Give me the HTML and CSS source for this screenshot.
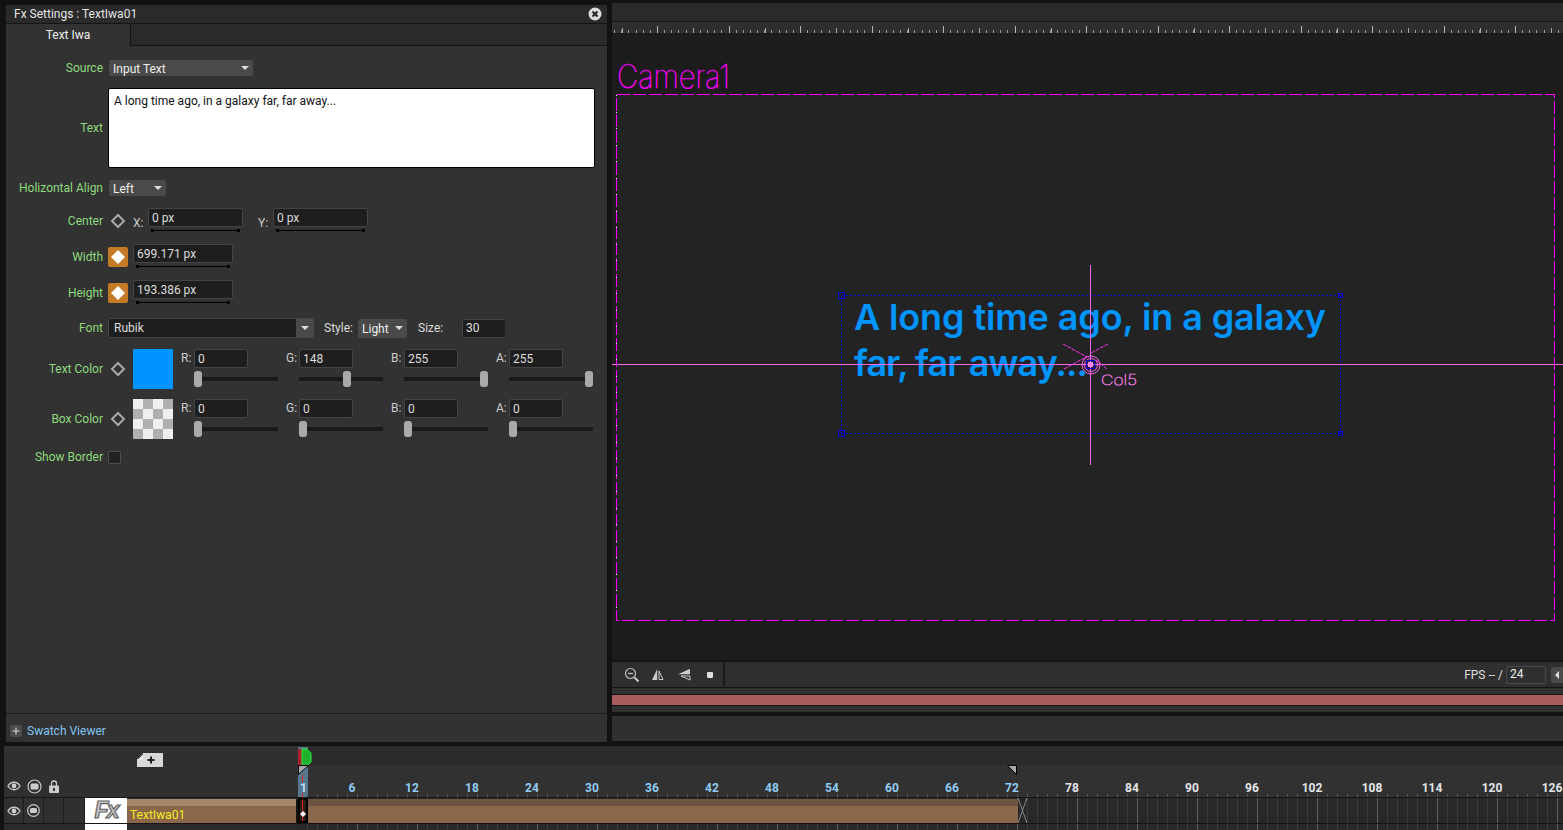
FILE: index.html
```html
<!DOCTYPE html>
<html lang="en">
<head>
<meta charset="utf-8">
<title>Fx Settings : TextIwa01</title>
<link rel="stylesheet" href="styles.css">
</head>
<body>
<div class="app">
  <div class="top">
    <section class="fx-panel">
      <header class="fx-title">
        <span>Fx Settings : TextIwa01</span>
        <svg class="close" width="14" height="14" viewBox="0 0 14 14"><circle cx="7" cy="7" r="6.500" fill="#dcdcdc"/><path d="M4.500 4.500l5 5M9.500 4.500l-5 5" stroke="#222" stroke-width="2"/></svg>
      </header>
      <div class="tabs"><div class="tab">Text Iwa</div></div>
      <div class="form">
        <div class="row h16">
          <label class="lbl">Source</label>
          <div class="select w144"><span>Input Text</span><i class="caret"></i></div>
        </div>
        <div class="row h80 mt12">
          <label class="lbl">Text</label>
          <div class="textbox">A long time ago, in a galaxy far, far away...</div>
        </div>
        <div class="row h16 mt12">
          <label class="lbl">Holizontal Align</label>
          <div class="select w57"><span>Left</span><i class="caret"></i></div>
        </div>
        <div class="row h26 mt12">
          <label class="lbl">Center</label>
          <svg class="kf" width="20" height="20" viewBox="0 0 20 20"><path d="M10 4l6 6-6 6-6-6z" fill="none" stroke="#a8a8a8" stroke-width="2"/></svg>
          <span class="axis">X:</span>
          <div class="field w95"><div class="num">0 px</div><div class="arrow"></div></div>
          <span class="axis axis-y">Y:</span>
          <div class="field w95"><div class="num">0 px</div><div class="arrow"></div></div>
        </div>
        <div class="row h26 mt10">
          <label class="lbl">Width</label>
          <svg class="kf on" width="20" height="20" viewBox="0 0 20 20"><rect width="20" height="20" rx="2" fill="#c47a26"/><path d="M10 3l7 7-7 7-7-7z" fill="#fff"/></svg>
          <div class="field w100"><div class="num">699.171 px</div><div class="arrow"></div></div>
        </div>
        <div class="row h26 mt10">
          <label class="lbl">Height</label>
          <svg class="kf on" width="20" height="20" viewBox="0 0 20 20"><rect width="20" height="20" rx="2" fill="#c47a26"/><path d="M10 3l7 7-7 7-7-7z" fill="#fff"/></svg>
          <div class="field w100"><div class="num">193.386 px</div><div class="arrow"></div></div>
        </div>
        <div class="row h20 mt12">
          <label class="lbl">Font</label>
          <div class="combo"><span>Rubik</span><b class="combo-btn"><i class="caret"></i></b></div>
          <span class="plain style-lbl">Style:</span>
          <div class="select w49"><span>Light</span><i class="caret"></i></div>
          <span class="plain size-lbl">Size:</span>
          <div class="num size">30</div>
        </div>
        <div class="row h40 mt11">
          <label class="lbl">Text Color</label>
          <svg class="kf" width="20" height="20" viewBox="0 0 20 20"><path d="M10 4l6 6-6 6-6-6z" fill="none" stroke="#a8a8a8" stroke-width="2"/></svg>
          <div class="swatch blue"></div>
          <div class="channels">
            <div class="channel"><span class="ch">R:</span><div class="num">0</div><div class="track"><i class="thumb" style="left:0"></i></div></div>
            <div class="channel"><span class="ch">G:</span><div class="num">148</div><div class="track"><i class="thumb" style="left:44px"></i></div></div>
            <div class="channel"><span class="ch">B:</span><div class="num">255</div><div class="track"><i class="thumb" style="left:76px"></i></div></div>
            <div class="channel"><span class="ch">A:</span><div class="num">255</div><div class="track"><i class="thumb" style="left:76px"></i></div></div>
          </div>
        </div>
        <div class="row h40 mt10">
          <label class="lbl">Box Color</label>
          <svg class="kf" width="20" height="20" viewBox="0 0 20 20"><path d="M10 4l6 6-6 6-6-6z" fill="none" stroke="#a8a8a8" stroke-width="2"/></svg>
          <div class="swatch checker"></div>
          <div class="channels">
            <div class="channel"><span class="ch">R:</span><div class="num">0</div><div class="track"><i class="thumb" style="left:0"></i></div></div>
            <div class="channel"><span class="ch">G:</span><div class="num">0</div><div class="track"><i class="thumb" style="left:0"></i></div></div>
            <div class="channel"><span class="ch">B:</span><div class="num">0</div><div class="track"><i class="thumb" style="left:0"></i></div></div>
            <div class="channel"><span class="ch">A:</span><div class="num">0</div><div class="track"><i class="thumb" style="left:0"></i></div></div>
          </div>
        </div>
        <div class="row h14 mt11">
          <label class="lbl">Show Border</label>
          <div class="check"></div>
        </div>
      </div>
      <footer class="swatch-bar">
        <svg class="plus" width="12" height="12" viewBox="0 0 12 12"><rect width="12" height="12" rx="2" fill="#4c4c4c"/><path d="M6 2.500v7M2.500 6h7" stroke="#ddd" stroke-width="1"/></svg>
        <span>Swatch Viewer</span>
      </footer>
    </section>

    <section class="viewer-col">
      <div class="viewer-title"></div>
      <svg class="ruler" width="951" height="11" viewBox="612 22 951 11">
        <line x1="585.5" x2="1563" y1="31.5" y2="31.5" stroke="#9a9a9a" stroke-width="3" stroke-dasharray="1 6.15" shape-rendering="crispEdges"/>
        <line x1="621.75" x2="1563" y1="30.5" y2="30.5" stroke="#aaa" stroke-width="5" stroke-dasharray="1 70.5" shape-rendering="crispEdges"/>
        <line x1="585.5" x2="1563" y1="29.5" y2="29.5" stroke="#b5b5b5" stroke-width="7" stroke-dasharray="1 70.5" shape-rendering="crispEdges"/>
      </svg>
      <svg class="canvas" width="951" height="627" viewBox="612 33 951 627">
        <rect x="617" y="95" width="938" height="525" fill="#232323"/>
        <rect x="616.5" y="94.500" width="938" height="526" fill="none" stroke="#ff00ff" stroke-width="1" stroke-dasharray="13 3" shape-rendering="crispEdges"/>
        <line x1="616.5" x2="616.5" y1="95" y2="620" stroke="#fff" stroke-dasharray="1 15.500" shape-rendering="crispEdges"/>
        <text class="cam" x="617" y="88" textLength="113" lengthAdjust="spacingAndGlyphs">Camera1</text>
        <text class="head" x="854" y="330" textLength="472">A long time ago, in a galaxy</text>
        <text class="head" x="854" y="376" textLength="234">far, far away...</text>
        <g fill="none" stroke="#0000e0" shape-rendering="crispEdges">
          <path d="M841.5 295.500H1340.500M841.5 433.500H1340.500M841.5 295.500V433.500M1340.500 295.500V433.500" stroke-dasharray="2 2"/>
          <rect x="838.5" y="292.500" width="6" height="6"/>
          <rect x="838.5" y="430.500" width="6" height="6"/>
          <rect x="1338.5" y="293.500" width="4" height="4"/>
          <rect x="1338.5" y="431.500" width="4" height="4"/>
        </g>
        <g stroke="#ff66ee" fill="none">
          <line x1="612" x2="1563" y1="364.500" y2="364.500"/>
          <line x1="1090.500" x2="1090.500" y1="265" y2="465"/>
          <circle cx="1091" cy="365" r="9"/>
          <circle cx="1091" cy="365" r="6.500"/>
          <path d="M1063 344l24 13M1108 344l-17 9M1064 369l24-13M1096 360l11 9" stroke="#ff33ee" stroke-dasharray="4 1"/>
        </g>
        <rect x="1086.500" y="360.500" width="8" height="8" fill="none" stroke="#0000e0"/>
        <rect x="1088" y="362" width="5" height="5" fill="#ff88f2"/>
        <text class="col" x="1101" y="385" textLength="36" lengthAdjust="spacingAndGlyphs">Col5</text>
      </svg>
      <div class="viewer-bar">
        <div class="tools">
          <svg width="16" height="16" viewBox="0 0 16 16"><circle cx="6.500" cy="6.500" r="5" fill="none" stroke="#bbb" stroke-width="1.200"/><path d="M4 6.500h5" stroke="#bbb" stroke-width="1.400"/><path d="M10.500 10.500l4 4" stroke="#ccc" stroke-width="2"/></svg>
          <svg width="12" height="13" viewBox="0 0 12 13"><path d="M5.200 1v11H0z" fill="#ccc"/><path d="M7 3v8.500h4z" fill="none" stroke="#ccc"/></svg>
          <svg class="flip-v" width="13" height="12" viewBox="0 0 13 12"><path d="M12 0H11.500L0 5.200H12z" fill="#ccc"/><path d="M3 7h9v4z" fill="none" stroke="#ccc"/></svg>
          <i class="stop"></i>
        </div>
        <div class="fps">
          <span>FPS -- /</span>
          <div class="fps-input">24</div>
          <div class="fps-btn"><i></i></div>
        </div>
      </div>
      <div class="spacer-a"></div>
      <div class="redbar"></div>
      <div class="spacer-b"></div>
      <div class="viewer-foot"></div>
    </section>
  </div>

  <section class="timeline">
    <div class="tl-head">
      <div class="tl-head-left">
        <svg class="add-layer" width="26" height="14" viewBox="0 0 26 14"><path d="M0 14V6L6 0H26V14z" fill="#d8d8d8"/><path d="M0 6L6 0V6z" fill="#2f2f2f"/><path d="M1 6.500L6 1.500V6.500z" fill="#f2f2f2"/><path d="M14 3.500v7M10.500 7h7" stroke="#222" stroke-width="2"/></svg>
        <div class="col-icons">
          <div class="cell-i"><svg width="14" height="10" viewBox="0 0 14 10"><path d="M1 5c3-5 9-5 12 0-3 5-9 5-12 0z" fill="none" stroke="#ccc" stroke-width="1.300"/><circle cx="7" cy="5" r="2.400" fill="#ccc"/></svg></div>
          <div class="cell-i"><svg width="15" height="15" viewBox="0 0 15 15"><circle cx="7.500" cy="7.500" r="6.500" fill="none" stroke="#ccc" stroke-width="1.200"/><rect x="3.500" y="4.500" width="8" height="6" rx="1.500" fill="#ccc"/></svg></div>
          <div class="cell-i"><svg width="10" height="13" viewBox="0 0 10 13"><path d="M2.500 6V3.500a2.500 2.500 0 0 1 5 0V6" fill="none" stroke="#ccc" stroke-width="1.300"/><rect y="5.500" width="10" height="7.500" rx="1" fill="#ccc"/><rect x="4" y="8" width="2" height="3" fill="#333"/></svg></div>
        </div>
      </div>
      <div class="tl-head-right">
        <div class="band"></div>
        <div class="frames">
          <span class="first">1</span>
          <span>6</span><span>12</span><span>18</span><span>24</span><span>30</span><span>36</span><span>42</span><span>48</span><span>54</span><span>60</span><span>66</span><span>72</span>
          <span class="out">78</span><span class="out">84</span><span class="out">90</span><span class="out">96</span><span class="out">102</span><span class="out">108</span><span class="out">114</span><span class="out">120</span><span class="out">126</span>
        </div>
        <svg class="marker" width="951" height="51" viewBox="298 746 951 51">
          <path d="M298 749h4v17h-4z" fill="#a8242a"/>
          <path d="M302 749h5l4 4v9l-4 4h-5z" fill="#1fb22c" stroke="#28e838"/>
          <path d="M298.500 765.500h10l-10 9z" fill="#aaa" stroke="#000"/>
          <path d="M1007.500 765.500h9v9z" fill="#aaa" stroke="#000"/>
          <line x1="302.500" x2="302.500" y1="775" y2="782" stroke="#e02020"/>
          <line x1="302.500" x2="302.500" y1="793" y2="797" stroke="#e02020"/>
        </svg>
      </div>
    </div>
    <div class="tl-row">
      <div class="layer-left">
        <div class="cell-i"><svg width="14" height="10" viewBox="0 0 14 10"><path d="M1 5c3-5 9-5 12 0-3 5-9 5-12 0z" fill="none" stroke="#ccc" stroke-width="1.3"/><circle cx="7" cy="5" r="2.400" fill="#ccc"/></svg></div>
        <div class="cell-i"><svg width="13" height="13" viewBox="0 0 13 13"><circle cx="6.500" cy="6.500" r="5.800" fill="none" stroke="#ccc" stroke-width="1.200"/><rect x="3" y="4" width="7" height="5" rx="1.500" fill="#ccc"/></svg></div>
        <div class="cell-i"></div>
        <div class="cell-i cell-wide"></div>
        <div class="thumb-fx"><span>Fx</span></div>
        <div class="layer-name">TextIwa01</div>
      </div>
      <div class="layer-track">
        <div class="cell-now"><svg width="8" height="8" viewBox="0 0 8 8"><path d="M4 0l4 4-4 4-4-4z" fill="#fff"/></svg></div>
        <div class="level"></div>
        <svg class="end-x" width="10" height="25" viewBox="0 0 10 25"><path d="M0 0l9 25M9 0L0 25" stroke="#8a8a8a" fill="none"/></svg>
      </div>
    </div>
    <div class="tl-row next">
      <div class="layer-left"><div class="next-gap"></div><div class="thumb-blank"></div></div>
      <div class="layer-track"></div>
    </div>
  </section>
</div>
</body>
</html>
```

FILE: styles.css
```css
* { box-sizing: border-box; }
html, body { margin: 0; height: 100%; }
body { background: #121212; overflow: hidden; font: 12px/16px "Roboto", "Open Sans", sans-serif; color: #ddd; font-variant-ligatures: none; }
.app { width: 1563px; height: 830px; display: flex; flex-direction: column; overflow: hidden; }

.top { display: flex; height: 746px; flex: none; }
.fx-panel { width: 601px; margin: 5px 5px 0 6px; height: 737px; background: #323232; display: flex; flex-direction: column; flex: none; }
.fx-title { height: 19px; padding: 0 5px 0 8px; background: #2a2a2a; border-bottom: 1px solid #141414; display: flex; align-items: center; justify-content: space-between; color: #e4e4e4; flex: none; }
.tabs { height: 22px; background: #2a2a2a; border-bottom: 1px solid #141414; flex: none; }
.tab { width: 125px; height: 22px; background: #323232; border-right: 1px solid #141414; text-align: center; line-height: 22px; color: #eee; }

.form { flex: 1; padding-top: 14px; }
.row { display: flex; align-items: center; }
.h14 { height: 14px; } .h16 { height: 16px; } .h20 { height: 20px; } .h26 { height: 26px; } .h40 { height: 40px; } .h80 { height: 80px; }
.mt10 { margin-top: 10px; } .mt11 { margin-top: 11px; } .mt12 { margin-top: 12px; }
.lbl { width: 97px; margin-right: 5px; text-align: right; color: #8ed97c; white-space: nowrap; flex: none; }

.select { height: 16px; margin-left: 1px; background: #4a4a4a; border-radius: 2px; padding: 0 4px; display: flex; align-items: center; justify-content: space-between; color: #eee; }
.select span { padding-top: 1px; }
.w144 { width: 144px; } .w57 { width: 57px; } .w49 { width: 49px; height: 19px; margin-left: 5px; }
.caret { width: 0; height: 0; border: 4px solid transparent; border-top-color: #ddd; border-bottom: 0; display: block; }
.textbox { width: 487px; height: 80px; background: #fff; border: 1px solid #000; border-radius: 2px; color: #111; padding: 4px 5px; }

.kf { flex: none; }
.axis { width: 15px; margin-left: 5px; padding-top: 3px; color: #ccc; flex: none; }
.axis-y { margin-left: 15px; }
.field { display: flex; flex-direction: column; height: 26px; flex: none; }
.w95 { width: 95px; } .w100 { width: 100px; margin-left: 5px; }
.num { height: 19px; background: #1e1e1e; border: 1px solid #444; border-radius: 2px; padding: 0 3px; line-height: 18px; color: #ddd; }
.arrow { height: 1px; background: #000; margin: 3px 3px 0; position: relative; }
.arrow::before, .arrow::after { content: ""; position: absolute; top: -1px; width: 3px; height: 3px; background: #000; }
.arrow::before { left: 0; } .arrow::after { right: 0; }

.combo { width: 206px; height: 20px; background: #1e1e1e; border: 1px solid #444; border-radius: 2px; display: flex; justify-content: space-between; padding-left: 5px; line-height: 18px; }
.combo-btn { width: 17px; background: #4a4a4a; display: flex; align-items: center; justify-content: center; }
.plain { color: #ddd; }
.style-lbl { margin-left: 10px; width: 29px; }
.size-lbl { margin-left: 11px; width: 44px; }
.size { width: 43px; border-right: 0; border-radius: 2px 0 0 2px; line-height: 17px; }

.swatch { width: 40px; height: 40px; margin-left: 5px; flex: none; }
.blue { background: #0094ff; }
.checker { background: repeating-conic-gradient(#b0b0b0 0 25%, #efefef 0 50%) 0 0 / 20px 20px; }
.channels { display: flex; margin-left: 8px; height: 40px; }
.channel { width: 105px; display: grid; grid-template-columns: 13px 84px; grid-template-rows: 19px 16px; row-gap: 3px; }
.channel .num { width: 54px; }
.ch { text-align: right; padding-right: 3px; color: #ccc; line-height: 18px; }
.track { grid-column: 2; height: 4px; align-self: center; background: #1a1a1a; position: relative; }
.thumb { position: absolute; top: -6px; width: 8px; height: 16px; background: #aaa; border-radius: 3px; }
.check { width: 13px; height: 13px; background: #222; border: 1px solid #4c4c4c; border-radius: 2px; }

.swatch-bar { height: 29px; border-top: 1px solid #1c1c1c; padding: 5px 0 0 4px; display: flex; align-items: center; gap: 5px; color: #82c5f2; flex: none; }

.viewer-col { flex: 1; margin-top: 3px; display: flex; flex-direction: column; min-width: 0; }
.viewer-title { height: 19px; background: #2a2a2a; border-bottom: 1px solid #141414; flex: none; }
.ruler { display: block; background: #2f2f2f; flex: none; }
.canvas { display: block; background: #1c1c1c; flex: none; }
.canvas .cam { font: 100 33px "Inter", "Lato", sans-serif; fill: none; stroke: #ff00ff; stroke-width: .7px; }
.canvas .head { font: 600 36px "Inter", "Roboto", sans-serif; fill: #0094ff; }
.canvas .col { font: 100 14px "Inter", "Lato", sans-serif; fill: none; stroke: #ff80ee; stroke-width: .5px; }

.viewer-bar { height: 28px; border-top: 2px solid #141414; border-bottom: 1px solid #141414; background: #2f2f2f; display: flex; justify-content: space-between; flex: none; }
.tools { width: 113px; border-right: 2px solid #1a1a1a; display: flex; align-items: center; gap: 12px; padding-left: 12px; }
.flip-v { margin-left: 2px; }
.stop { width: 6px; height: 6px; border-radius: 1px; background: #ddd; margin-left: 4px; }
.fps { display: flex; align-items: center; color: #ddd; }
.fps span { margin-right: 3px; }
.fps-input { width: 40px; height: 18px; border: 1px solid #4a4a4a; border-radius: 2px; padding-left: 3px; line-height: 15px; color: #eee; }
.fps-btn { width: 12px; height: 16px; margin-left: 5px; background: #4a4a4a; border-radius: 2px 0 0 2px; display: flex; align-items: center; justify-content: center; }
.fps-btn i { border: 4px solid transparent; border-right-color: #ddd; border-left: 0; }
.spacer-a { height: 6px; background: #303030; flex: none; }
.redbar { height: 12px; background: #ab5c5c; border-top: 1px solid #141414; border-bottom: 1px solid #141414; flex: none; }
.spacer-b { height: 6px; background: #303030; flex: none; }
.viewer-foot { height: 25px; margin-top: 4px; background: #303030; flex: none; }

.timeline { flex: 1; margin-left: 4px; background: #2a2a2a; display: flex; flex-direction: column; min-height: 0; }
.tl-head { height: 51px; display: flex; flex: none; }
.tl-head-left { width: 294px; background: #303030; padding-top: 7px; display: flex; flex-direction: column; flex: none; }
.add-layer { margin-left: 133px; display: block; }
.col-icons { display: flex; margin-top: auto; height: 20px; margin-bottom: 1px; }
.cell-i { width: 20px; height: 100%; display: flex; align-items: center; justify-content: center; flex: none; }
.cell-wide { width: 21px; }
.tl-head-right { flex: 1; position: relative; background: #313131; display: flex; flex-direction: column; }
.tl-head-right::before { content: ""; position: absolute; left: 0; top: 1px; bottom: 0; width: 10px; background: #56788f; }
.band { height: 19px; background: #2a2a2a; flex: none; }
.frames { flex: 1; position: relative; display: flex; white-space: nowrap; overflow: hidden; font-weight: 700; color: #8fcbf2; line-height: 16px; padding-top: 15px; background: repeating-linear-gradient(90deg, transparent 0 9px, #5a5a5a 9px 10px) 0 100% / 100% 3px no-repeat; }
.frames span { width: 60px; text-align: center; flex: none; }
.frames .first { width: 24px; text-align: left; padding-left: 2px; color: #b9dcf5; }
.frames .out { color: #e2e6ea; }
.marker { position: absolute; left: 0; top: 0; pointer-events: none; }

.tl-row { height: 26px; display: flex; border-top: 1px solid #151515; flex: none; }
.layer-left { width: 294px; display: flex; background: #303030; flex: none; }
.layer-left .cell-i { border-right: 1px solid #1c1c1c; }
.thumb-fx { width: 42px; height: 25px; background: #fff; text-align: center; flex: none; }
.thumb-fx span { display: block; font: italic 700 23px/25px "Liberation Sans", sans-serif; color: #c4c4c4; -webkit-text-stroke: 1.2px #666; letter-spacing: -2px; }
.layer-name { flex: 1; padding: 9px 0 0 3px; line-height: 15px; color: #f4ec22; background: linear-gradient(#a5876b 0 7px, #8a6748 7px); height: 24px; margin-top: 1px; border-right: 2px solid #151515; }
.layer-track { flex: 1; display: flex; background: repeating-linear-gradient(90deg, transparent 0 59px, #5e5e5e 59px 60px), repeating-linear-gradient(90deg, transparent 0 9px, #3c3c3c 9px 10px), #282828; }
.cell-now { width: 10px; height: 25px; background: linear-gradient(90deg, #2a1f18 0 2px, #e02020 2px 3px, #2a1f18 3px); border: 2px solid #000; display: flex; align-items: flex-end; justify-content: center; padding-bottom: 3px; flex: none; }
.level { width: 710px; height: 24px; margin-top: 1px; background: linear-gradient(#6e5340 0 7px, #8a6748 7px); flex: none; }
.end-x { display: block; }
.next .layer-left { background: #2a2a2a; }
.next-gap { width: 81px; flex: none; }
.thumb-blank { width: 42px; background: #fff; }
```
